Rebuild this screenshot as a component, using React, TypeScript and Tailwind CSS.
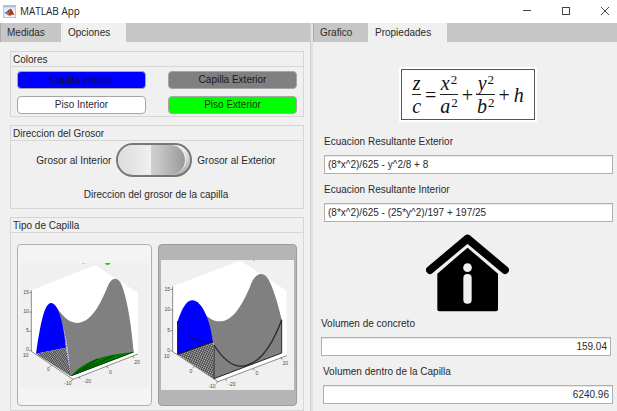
import { useState } from "react";
import type { ReactNode } from "react";

function MatlabIcon() {
  return (
    <svg viewBox="0 0 39 39" className="size-[13px]" aria-hidden="true">
      <rect x="1" y="1" width="37" height="37" fill="#e6eef6" stroke="#a3b6c9" strokeWidth="2" />
      <rect x="1" y="1" width="37" height="6" fill="#a9bfd6" />
      <path d="M4 24 L12 19 L17 23 L11 28 Z" fill="#3f86c0" />
      <path d="M12 19 L22 11 L17 23 Z" fill="#2b4a80" />
      <path d="M22 11 C25 10 29 21 34 30 C29 26 26 27 22 32 C19 34 16 30 11 28 L17 23 Z" fill="#d4481c" />
      <path d="M22 11 C24 14 23 21 22 32 C25 28 28 26 34 30 C29 21 25 10 22 11 Z" fill="#a03018" />
    </svg>
  );
}

function TitleBar() {
  const control = "flex h-full w-[39px] items-center justify-center pb-[2px]";
  return (
    <header className="flex h-[23px] items-center bg-white pl-[3px]">
      <MatlabIcon />
      <h1 className="ml-1 flex-1 font-['Open_Sans','Noto_Sans',sans-serif] text-[10px] leading-[15px] text-[#222]">
        MATLAB App
      </h1>
      <div className="-mr-[7px] flex h-full">
        <button type="button" aria-label="Minimizar" className={control}>
          <svg viewBox="0 0 10 10" className="size-[10px]" stroke="#444">
            <path d="M1 4.500 H9" />
          </svg>
        </button>
        <button type="button" aria-label="Maximizar" className={control}>
          <svg viewBox="0 0 10 10" className="size-[10px]" stroke="#444" fill="none">
            <rect x="1.500" y="1.500" width="7" height="7" />
          </svg>
        </button>
        <button type="button" aria-label="Cerrar" className={control}>
          <svg viewBox="0 0 10 10" className="size-[10px]" stroke="#444">
            <path d="M1 1 L9 9 M9 1 L1 9" />
          </svg>
        </button>
      </div>
    </header>
  );
}

function TabBar({ tabs, active }: { tabs: { name: string; width: string }[]; active: string }) {
  return (
    <div role="tablist" className="flex h-[19px] bg-[#c6c6c6]">
      {tabs.map((tab) => (
        <button
          key={tab.name}
          type="button"
          role="tab"
          aria-selected={tab.name === active}
          className={`${tab.width} text-left ${
            tab.name === active ? "rounded-t-[1px] bg-[#f0f0f0] pl-[7px]" : "border-l border-[#adadad] pl-[6px]"
          }`}
        >
          {tab.name}
        </button>
      ))}
    </div>
  );
}

function Panel({ title, children }: { title: string; children: ReactNode }) {
  return (
    <section className="border border-[#d6d6d6]">
      <h2 className="h-[15px] border-b border-[#d6d6d6] pl-[2px] leading-[15px]">{title}</h2>
      {children}
    </section>
  );
}

function ColorButton({ color, children }: { color: string; children: ReactNode }) {
  return (
    <button
      type="button"
      className={`h-[18px] rounded-[4px] border border-[#a6a6a6] leading-[16px] ${color}`}
    >
      {children}
    </button>
  );
}

function Tick({ x, y, children }: { x: number; y: number; children: string }) {
  return (
    <text x={x} y={y} textAnchor="middle" fontSize="15" fill="#4a4a4a">
      {children}
    </text>
  );
}

function OpenVault() {
  return (
    <svg viewBox="58 75 387 375" className="w-full" aria-hidden="true">
      <defs>
        <pattern id="floorA" width="5" height="5" patternUnits="userSpaceOnUse" patternTransform="rotate(32)">
          <rect width="5" height="5" fill="#c4c4c4" />
          <path d="M0 0 H5 M0 0 V5" stroke="#111" strokeWidth="3" />
        </pattern>
      </defs>
      <rect x="58" y="75" width="387" height="375" fill="#f0f0f0" />
      <path d="M92 157 L283 82 L412 164 L412 348 L217 424 L92 340 Z" fill="#fff" />
      <path d="M313 75 H329 Q328 81 321 81 Q314 81 313 75 Z" fill="#00dc00" />
      <path d="M246 76 H251" stroke="#888" strokeWidth="2" />
      <path
        d="M165 205 C190 241 208 254 228 255 C272 255 299 198 320 148 C333 115 352 115 364 143 C382 192 392 265 399 342 L210 415 C204 345 192 250 165 205 Z"
        fill="#808080"
      />
      <path d="M106 347 C119 254 132 195 151 195 C176 197 189 264 196 329 Z" fill="#0000ff" />
      <path d="M106 347 L196 329 L210 415 Z" fill="url(#floorA)" />
      <path d="M176 228 C190 265 202 350 209 413" stroke="#2020c0" strokeWidth="2" strokeDasharray="3 2" fill="none" />
      <path d="M210 415 C248 372 292 352 399 342 Z" fill="#007a00" />
      <path d="M212 413 L399 342 M224 406 L290 363 M246 396 L340 352" stroke="#043d04" strokeWidth="3" />
      <path
        d="M92 157 V340 L217 424 L412 348 M86 163 H92 M86 222 H92 M86 280 H92 M86 338 H92 M153 382 L147 386 M217 424 L211 429 M235 417 L239 423 M318 385 L323 391 M396 354 L400 360"
        fill="none"
        stroke="#555"
        strokeWidth="2"
      />
      <Tick x={76} y={167}>15</Tick>
      <Tick x={76} y={225}>10</Tick>
      <Tick x={80} y={283}>5</Tick>
      <Tick x={80} y={339}>0</Tick>
      <Tick x={75} y={357}>10</Tick>
      <Tick x={143} y={398}>0</Tick>
      <Tick x={202} y={441}>-10</Tick>
      <Tick x={260} y={436}>-20</Tick>
      <Tick x={329} y={407}>0</Tick>
      <Tick x={409} y={378}>20</Tick>
    </svg>
  );
}

function WalledVault() {
  return (
    <svg viewBox="30 70 399 390" className="w-full" aria-hidden="true">
      <defs>
        <pattern id="floorB" width="5" height="5" patternUnits="userSpaceOnUse" patternTransform="rotate(-20)">
          <rect width="5" height="5" fill="#c8c8c8" />
          <path d="M0 0 H5 M0 0 V5" stroke="#111" strokeWidth="3" />
        </pattern>
      </defs>
      <rect x="30" y="70" width="399" height="390" fill="#f0f0f0" />
      <path d="M65 149 L268 72 L407 162 L407 357 L201 435 L65 345 Z" fill="#fff" />
      <path d="M306 72 H311" stroke="#999" strokeWidth="2" />
      <path
        d="M145 210 C166 243 184 253 205 254 C248 254 274 202 297 150 C312 105 340 101 355 133 C372 168 384 216 392 249 L392 349 L189 426 L189 325 C180 280 167 238 145 210 Z"
        fill="#808080"
      />
      <path d="M80 353 V254 C94 211 108 191 124 191 C153 192 176 248 186 315 Z" fill="#0000ff" />
      <path d="M80 353 L187 315 L189 426 Z" fill="url(#floorB)" />
      <path d="M80 254 C105 302 140 318 186 316" fill="none" stroke="#08087c" strokeWidth="3" />
      <path d="M80 254 V353 L187 315" fill="none" stroke="#111" strokeWidth="3" />
      <path d="M189 325 V426 L392 349 V249" fill="none" stroke="#262626" strokeWidth="3" />
      <path d="M189 325 C229 388 264 396 292 384 C338 369 372 303 392 249" fill="none" stroke="#2b2b2b" strokeWidth="4" />
      <path
        d="M65 149 V345 L201 435 L407 357 M59 158 H65 M59 220 H65 M59 282 H65 M59 343 H65 M131 389 L125 393 M201 435 L195 440 M223 427 L227 433 M307 395 L311 401 M390 363 L394 369"
        fill="none"
        stroke="#555"
        strokeWidth="2"
      />
      <Tick x={49} y={162}>15</Tick>
      <Tick x={49} y={224}>10</Tick>
      <Tick x={53} y={286}>5</Tick>
      <Tick x={53} y={345}>0</Tick>
      <Tick x={47} y={364}>10</Tick>
      <Tick x={120} y={408}>0</Tick>
      <Tick x={183} y={454}>-10</Tick>
      <Tick x={243} y={448}>-20</Tick>
      <Tick x={318} y={416}>0</Tick>
      <Tick x={403} y={385}>20</Tick>
    </svg>
  );
}

function ThicknessSwitch() {
  const [outside, setOutside] = useState(false);
  return (
    <div className="flex flex-col items-center gap-[10px] pt-[2px] pr-[2px] pb-[6px]">
      <div className="flex items-center gap-[5px]">
        <span>Grosor al Interior</span>
        <input
          id="grosor"
          type="checkbox"
          role="switch"
          checked={outside}
          onChange={(e) => setOutside(e.target.checked)}
          className="flex h-[34px] w-[76px] appearance-none rounded-full border-2 border-[#767676] bg-linear-to-b from-[#f8f8f8] to-[#a8a8a8] before:h-full before:w-[68px] before:rounded-full before:border-r before:border-[#f4f4f4] before:bg-[linear-gradient(90deg,#dcdedd_0%,#e4e5e5_25%,#f0f0f0_49%,#cfcfcf_50%,#c2c2c2_65%,#999_100%)] checked:justify-end"
        />
        <span>Grosor al Exterior</span>
      </div>
      <label htmlFor="grosor" className="leading-[15px]">
        Direccion del grosor de la capilla
      </label>
    </div>
  );
}

function OptionsPane() {
  return (
    <div className="flex flex-col gap-2 pt-[9px] pr-[6px] pl-[10px]">
      <Panel title="Colores">
        <div className="grid grid-cols-2 gap-x-[22px] gap-y-[7px] px-[6px] pt-1 pb-[2px]">
          <ColorButton color="bg-[#0000ff] text-[#0c0c3c]">Capilla Interior</ColorButton>
          <ColorButton color="bg-[#808080] text-[#1a1a1a]">Capilla Exterior</ColorButton>
          <ColorButton color="bg-white">Piso Interior</ColorButton>
          <ColorButton color="bg-[#00ff00] text-[#0c3c0c]">Piso Exterior</ColorButton>
        </div>
      </Panel>
      <Panel title="Direccion del Grosor">
        <ThicknessSwitch />
      </Panel>
      <Panel title="Tipo de Capilla">
        <div className="grid grid-cols-[135fr_139fr] gap-[6px] px-[6px] pt-[11px] pb-1">
          <button
            type="button"
            aria-label="Capilla abierta"
            className="flex min-h-[162px] items-center rounded-[4px] border border-[#b0b0b0] bg-[#f4f4f4] px-[2px]"
          >
            <OpenVault />
          </button>
          <button
            type="button"
            aria-label="Capilla con muros"
            aria-pressed="true"
            className="flex min-h-[162px] items-center rounded-[4px] border border-[#9c9c9c] bg-[#b5b5b5] px-[2px]"
          >
            <WalledVault />
          </button>
        </div>
      </Panel>
    </div>
  );
}

function Fraction({ top, bottom, squared = false }: { top: string; bottom: string; squared?: boolean }) {
  const power = squared ? <sup className="top-[-6px] ml-px text-[13px] not-italic">2</sup> : null;
  return (
    <span className="flex flex-col items-center italic">
      <span className="h-[22px] leading-[22px]">
        {top}
        {power}
      </span>
      <span className="h-px w-full bg-[#222]" />
      <span className="h-[22px] leading-[22px]">
        {bottom}
        {power}
      </span>
    </span>
  );
}

function Formula() {
  return (
    <div className="bg-white p-[2px]">
      <div className="flex h-[51px] w-[134px] items-center justify-center gap-1 border border-[#555] font-['Liberation_Serif',serif] text-[20px] leading-[22px] text-[#111]">
        <Fraction top="z" bottom="c" />
        <span>=</span>
        <Fraction top="x" bottom="a" squared />
        <span>+</span>
        <Fraction top="y" bottom="b" squared />
        <span>+</span>
        <span className="italic">h</span>
      </div>
    </div>
  );
}

function HouseInfoIcon() {
  return (
    <svg viewBox="0 0 249 234" className="h-[78px] w-[83px]" role="img" aria-label="Informacion de la capilla">
      <path d="M12 108 L124.500 14 L237 108" fill="none" stroke="#000" strokeWidth="24" strokeLinecap="round" strokeLinejoin="round" />
      <path d="M124.500 41 L216 119 V226 Q216 232 210 232 H40 Q34 232 34 226 V119 Z" fill="#000" />
      <circle cx="124.500" cy="101" r="13" fill="#f0f0f0" />
      <rect x="112" y="120" width="25" height="89" rx="12" fill="#f0f0f0" />
    </svg>
  );
}

function Field({ id, label, value, numeric = false }: { id: string; label: string; value: string; numeric?: boolean }) {
  return (
    <div className="flex flex-col gap-[6px]">
      <label htmlFor={id} className="leading-[15px]">
        {label}
      </label>
      <input
        id={id}
        type="text"
        defaultValue={value}
        className={`h-[19px] w-full border border-[#b0b0b0] bg-white px-[3px] inset-shadow-[0_1px_#e8e8e8] ${
          numeric ? "text-right" : "text-left"
        }`}
      />
    </div>
  );
}

function PropertiesPane() {
  return (
    <div className="flex flex-col pt-[25px]">
      <div className="flex justify-center pl-[6px]">
        <Formula />
      </div>
      <div className="mt-3 flex flex-col gap-2 pr-1 pl-[11px]">
        <Field id="ec-exterior" label="Ecuacion Resultante Exterior" value="(8*x^2)/625 - y^2/8 + 8" />
        <Field id="ec-interior" label="Ecuacion Resultante Interior" value="(8*x^2)/625 - (25*y^2)/197 + 197/25" />
      </div>
      <div className="mt-3 flex justify-center pl-1">
        <HouseInfoIcon />
      </div>
      <div className="mt-1 pr-[6px] pl-2">
        <Field id="vol-concreto" label="Volumen de concreto" value="159.04" numeric />
      </div>
      <div className="mt-2 pr-1 pl-[10px]">
        <Field id="vol-capilla" label="Volumen dentro de la Capilla" value="6240.96" numeric />
      </div>
    </div>
  );
}

export default function App() {
  return (
    <div className="flex min-h-screen flex-col overflow-x-hidden bg-[#f0f0f0] font-['Liberation_Sans',Arial,sans-serif] text-[10px] text-[#2a2a2a]">
      <TitleBar />
      <main className="grid flex-1 grid-cols-[155fr_3px_152fr]">
        <div>
          <TabBar
            active="Opciones"
            tabs={[
              { name: "Medidas", width: "w-[61px]" },
              { name: "Opciones", width: "w-[65px]" },
            ]}
          />
          <OptionsPane />
        </div>
        <div className="border-l border-[#d0d0d0] bg-[#e2e2e2]" />
        <div>
          <TabBar
            active="Propiedades"
            tabs={[
              { name: "Grafico", width: "w-[55px]" },
              { name: "Propiedades", width: "w-[79px]" },
            ]}
          />
          <PropertiesPane />
        </div>
      </main>
    </div>
  );
}
